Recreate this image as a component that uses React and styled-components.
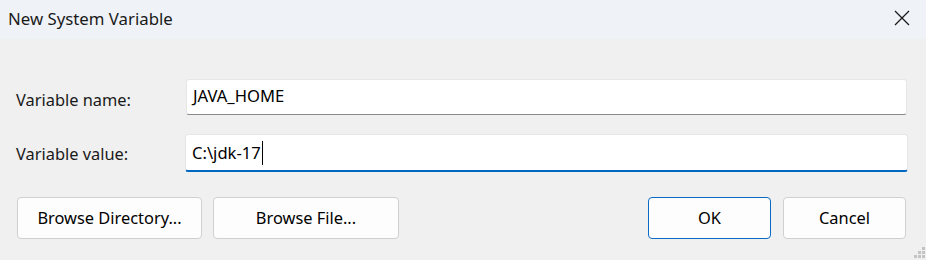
import React from "react";
import styled, { createGlobalStyle } from "styled-components";

const Global = createGlobalStyle`
  html, body {
    margin: 0;
    padding: 0;
    background: #f0f0f0;
  }
  body {
    font-family: "Noto Sans", "Open Sans", sans-serif;
    color: #000;
  }
`;

const Window = styled.div`
  position: relative;
  width: 926px;
  height: 260px;
  display: flex;
  flex-direction: column;
  background: #f0f0f0;
  overflow: hidden;
`;

const TitleBar = styled.div`
  height: 39px;
  flex: 0 0 39px;
  background: #eff3f8;
  display: flex;
  align-items: center;
  justify-content: space-between;
  padding: 0 0 3px 8px;
  box-sizing: border-box;
`;

const Title = styled.div`
  font-size: 16.8px;
  color: #1a1a1a;
`;

const CloseButton = styled.div`
  width: 46px;
  height: 36px;
  display: flex;
  align-items: center;
  justify-content: center;
  margin-right: 1px;
`;

const Body = styled.div`
  flex: 1;
  display: flex;
  flex-direction: column;
  padding: 40px 19px 0 16px;
`;

const Field = styled.div`
  display: grid;
  grid-template-columns: 170px 1fr;
  align-items: center;
  margin-bottom: ${(p) => p.$mb || 0}px;
`;

const Label = styled.div`
  font-size: 16.4px;
  color: #1a1a1a;
  padding-top: ${(p) => p.$pt || 0}px;
`;

const TextBox = styled.div`
  height: ${(p) => (p.$focused ? 38 : 36)}px;
  box-sizing: border-box;
  background: #fff;
  border: 1px solid #e6e6e6;
  border-bottom: ${(p) => (p.$focused ? "2px solid #0067c0" : "1px solid #8a8a8a")};
  border-radius: 3px;
  display: flex;
  align-items: center;
  padding: 0 0 ${(p) => (p.$focused ? 0 : 3)}px 6px;
  font-size: 16.6px;
  color: #000;
  margin-left: ${(p) => (p.$focused ? -1 : 0)}px;
  margin-right: ${(p) => (p.$focused ? -1 : 0)}px;
`;

const Caret = styled.span`
  display: inline-block;
  width: 1px;
  height: 24px;
  background: #000;
  margin-left: 1px;
`;

const ButtonRow = styled.div`
  display: flex;
  align-items: center;
  margin-top: 25px;
  padding-left: 1px;
  padding-right: 1px;
`;

const Button = styled.div`
  width: ${(p) => p.$w}px;
  height: 42px;
  box-sizing: border-box;
  background: #fdfdfd;
  border: 1px solid ${(p) => (p.$primary ? "#0a6bc6" : "#d0d0d0")};
  border-radius: 4px;
  display: flex;
  align-items: center;
  justify-content: center;
  font-size: 16.4px;
  color: #000;
  margin-right: ${(p) => p.$mr || 0}px;
  padding-bottom: 2px;
`;

const Spacer = styled.div`
  flex: 1;
`;

const Grip = styled.svg`
  position: absolute;
  right: 0;
  bottom: 0;
`;

export default function App() {
  return (
    <>
      <Global />
      <Window>
        <TitleBar>
          <Title>New System Variable</Title>
          <CloseButton>
            <svg width="16" height="16" viewBox="0 0 16 16">
              <path d="M1 1 L15 15 M15 1 L1 15" stroke="#1a1a1a" strokeWidth="1.3" fill="none" />
            </svg>
          </CloseButton>
        </TitleBar>
        <Body>
          <Field $mb={19}>
            <Label $pt={4}>Variable name:</Label>
            <TextBox>JAVA_HOME</TextBox>
          </Field>
          <Field>
            <Label $pt={0}>Variable value:</Label>
            <TextBox $focused>
              C:\jdk-17
              <Caret />
            </TextBox>
          </Field>
          <ButtonRow>
            <Button $w={185} $mr={11}>Browse Directory...</Button>
            <Button $w={186}>Browse File...</Button>
            <Spacer />
            <Button $w={123} $mr={12} $primary>OK</Button>
            <Button $w={123}>Cancel</Button>
          </ButtonRow>
        </Body>
        <Grip width="14" height="14" viewBox="0 0 14 14">
          <g fill="#c4c4c4">
            <rect x="10" y="1" width="3" height="3" />
            <rect x="6" y="5" width="3" height="3" />
            <rect x="10" y="5" width="3" height="3" />
            <rect x="2" y="9" width="3" height="3" />
            <rect x="6" y="9" width="3" height="3" />
            <rect x="10" y="9" width="3" height="3" />
          </g>
        </Grip>
      </Window>
    </>
  );
}
